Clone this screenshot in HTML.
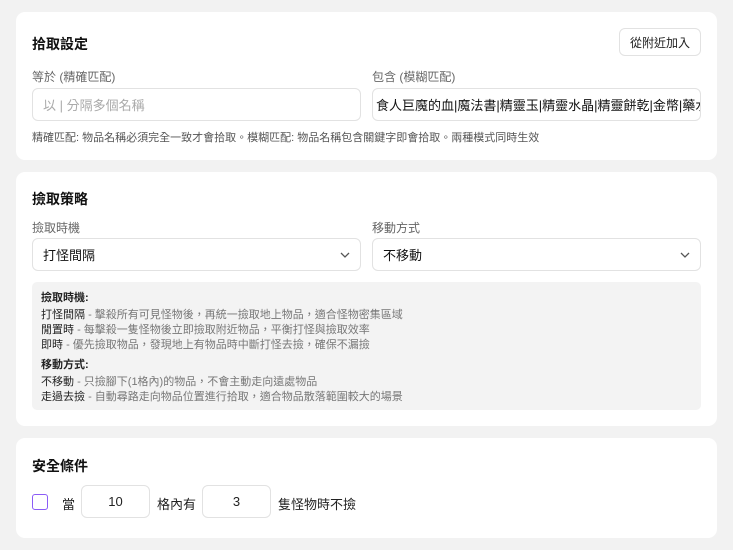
<!DOCTYPE html>
<html><head><meta charset="utf-8"><style>
*{box-sizing:border-box;margin:0;padding:0}
body{width:733px;height:550px;background:#f2f2f2;font-family:"Liberation Sans","Noto Sans CJK TC",sans-serif;color:#222;position:relative;overflow:hidden}
.card{position:absolute;left:16px;width:701px;background:#fff;border-radius:9px}
.abs{position:absolute}
.title{font-size:14px;font-weight:bold;color:#111}
.lbl{font-size:12px;color:#666}
.inp{position:absolute;border:1px solid #e2e2e2;border-radius:6px;background:#fff;font-size:13px;display:flex;align-items:center;padding:0 10px;overflow:hidden;white-space:nowrap}
.chev{position:absolute;right:10px;top:12px}
.info{position:absolute;left:16px;top:110px;width:669px;height:128px;background:#f3f3f3;border-radius:5px;font-size:11px;line-height:15px;padding:9px 0 0 9px;color:#222}
.info .g{color:#777}
</style></head><body>
<div class="card" style="top:12px;height:148px">
  <div class="abs title" style="left:16px;top:22px">拾取設定</div>
  <div class="abs" style="left:603px;top:16px;width:82px;height:28px;border:1px solid #e2e2e2;border-radius:6px;font-size:12px;display:flex;align-items:center;justify-content:center;color:#222">從附近加入</div>
  <div class="abs lbl" style="left:16px;top:56px">等於 (精確匹配)</div>
  <div class="abs lbl" style="left:356px;top:56px">包含 (模糊匹配)</div>
  <div class="inp" style="left:16px;top:76px;width:329px;height:33px;color:#aaa">以 | 分隔多個名稱</div>
  <div class="inp" style="left:356px;top:76px;width:329px;height:33px;color:#111;padding-left:3px">食人巨魔的血|魔法書|精靈玉|精靈水晶|精靈餅乾|金幣|藥水</div>
  <div class="abs" style="left:16px;top:117px;font-size:11px;color:#555">精確匹配: 物品名稱必須完全一致才會拾取。模糊匹配: 物品名稱包含關鍵字即會拾取。兩種模式同時生效</div>
</div>
<div class="card" style="top:172px;height:254px">
  <div class="abs title" style="left:16px;top:17px">撿取策略</div>
  <div class="abs lbl" style="left:16px;top:47px">撿取時機</div>
  <div class="abs lbl" style="left:356px;top:47px">移動方式</div>
  <div class="inp" style="left:16px;top:66px;width:329px;height:33px;color:#111">打怪間隔<svg class="chev" width="10" height="8" viewBox="0 0 10 8"><path d="M1 2l4 4 4-4" fill="none" stroke="#555" stroke-width="1.3"/></svg></div>
  <div class="inp" style="left:356px;top:66px;width:329px;height:33px;color:#111">不移動<svg class="chev" width="10" height="8" viewBox="0 0 10 8"><path d="M1 2l4 4 4-4" fill="none" stroke="#555" stroke-width="1.3"/></svg></div>
  <div class="info">
    <div style="font-weight:bold;margin-bottom:2px">撿取時機:</div>
    <div>打怪間隔 <span class="g">- 擊殺所有可見怪物後，再統一撿取地上物品，適合怪物密集區域</span></div>
    <div>閒置時 <span class="g">- 每擊殺一隻怪物後立即撿取附近物品，平衡打怪與撿取效率</span></div>
    <div>即時 <span class="g">- 優先撿取物品，發現地上有物品時中斷打怪去撿，確保不漏撿</span></div>
    <div style="font-weight:bold;margin-top:5px;margin-bottom:2px">移動方式:</div>
    <div>不移動 <span class="g">- 只撿腳下(1格內)的物品，不會主動走向遠處物品</span></div>
    <div>走過去撿 <span class="g">- 自動尋路走向物品位置進行拾取，適合物品散落範圍較大的場景</span></div>
  </div>
</div>
<div class="card" style="top:438px;height:100px">
  <div class="abs title" style="left:16px;top:18px">安全條件</div>
  <div class="abs" style="left:16px;top:56px;width:16px;height:16px;border:1.5px solid #8b5cf6;border-radius:3px"></div>
  <div class="abs" style="left:46px;top:56px;font-size:13px">當</div>
  <div class="inp" style="left:65px;top:47px;width:69px;height:33px;justify-content:center">10</div>
  <div class="abs" style="left:141px;top:56px;font-size:13px">格內有</div>
  <div class="inp" style="left:186px;top:47px;width:69px;height:33px;justify-content:center">3</div>
  <div class="abs" style="left:262px;top:56px;font-size:13px">隻怪物時不撿</div>
</div>
</body></html>
